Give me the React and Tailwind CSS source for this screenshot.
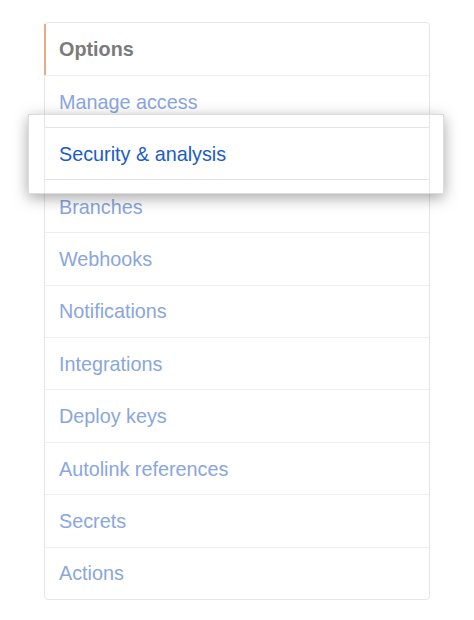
import React from "react";

const items = [
    "Manage access",
    "Security & analysis",
    "Branches",
    "Webhooks",
    "Notifications",
    "Integrations",
    "Deploy keys",
    "Autolink references",
    "Secrets",
    "Actions",
];

function Row({label}) {
    return (
        <div className="h-[52.4px] flex items-center pl-[14px] pt-[2px] border-t border-[#eceef1] text-[19.8px] text-[#8aa6de]">
            {label}
        </div>
    );
}

export default function App() {
    return (
        <div className="w-[474px] h-[620px] bg-white pt-[22px] pl-[44px]" style={{fontFamily: "'Liberation Sans', Arial, sans-serif"}}>
            <div className="relative w-[386px]">
                <div className="border border-[#e4e6ea] rounded-[4px]">
                    <div className="relative h-[52px] flex items-center pl-[14px] pt-[2px] text-[19.8px] font-bold text-[#7b7b7b]">
                        <span className="absolute left-[-1px] top-[1px] bottom-0 w-[2px] bg-[#eda987]"></span>
                        Options
                    </div>
                    {items.map((label) => (
                        <Row key={label} label={label} />
                    ))}
                </div>

                {/* highlighted row popped out */}
                <div className="absolute left-[-16px] top-[92px] w-[416px] h-[80px] bg-white border border-[#dcdcdc] shadow-[0_4px_14px_rgba(0,0,0,0.35)]">
                    <div className="ml-[15px] w-[386px] h-full border-x border-[#e6e8eb] pt-[12px]">
                        <div className="h-[53px] flex items-center pl-[14px] pt-[2px] border-y border-[#e2e4e8] text-[19.8px] text-[#1b5cc6]">
                            Security &amp; analysis
                        </div>
                    </div>
                </div>
            </div>
        </div>
    );
}
